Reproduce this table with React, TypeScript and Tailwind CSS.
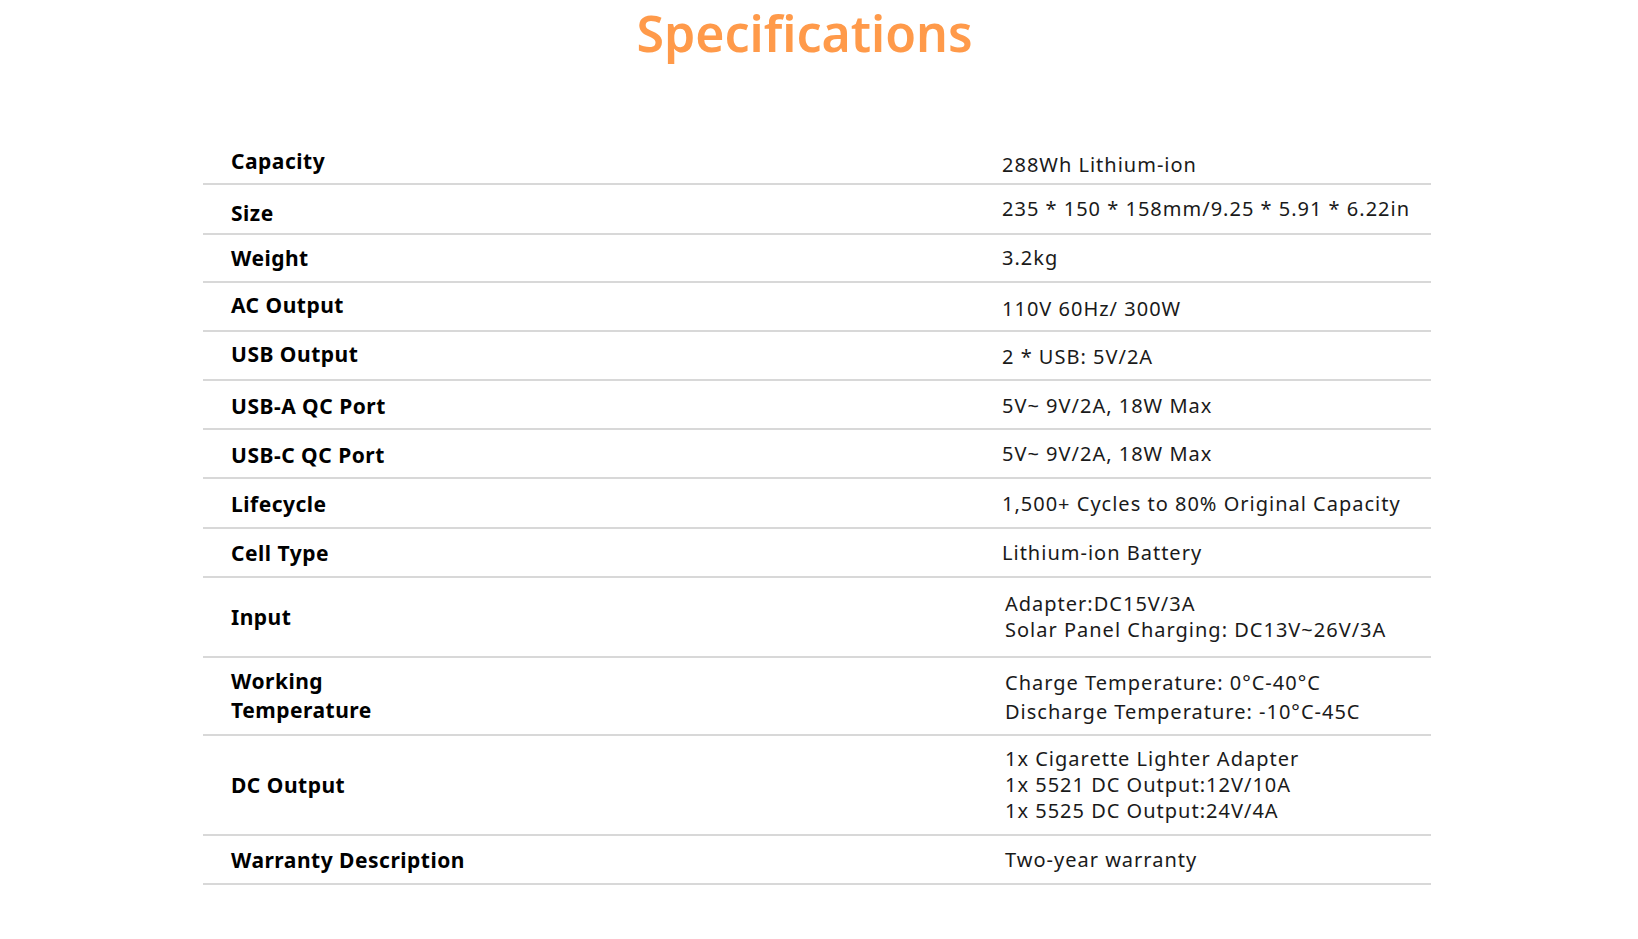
import React from "react";

type Row = {
  label: string[];
  value: string[];
  h: string;
  lh?: string;
  vx?: string;
  lo?: string;
  vo?: string;
};

const rows: Row[] = [
  { label: ["Capacity"], value: ["288Wh Lithium-ion"], h: "h-[46px]", vo: "pt-[8px]" },
  { label: ["Size"], value: ["235 * 150 * 158mm/9.25 * 5.91 * 6.22in"], h: "h-[50px]", lo: "pt-[7px]", vo: "pb-[1px]" },
  { label: ["Weight"], value: ["3.2kg"], h: "h-[48px]", lo: "pb-[1px]", vo: "pb-[1px]" },
  { label: ["AC Output"], value: ["110V 60Hz/ 300W"], h: "h-[49px]", lo: "pb-[4px]", vo: "pt-[4px]" },
  { label: ["USB Output"], value: ["2 * USB: 5V/2A"], h: "h-[49px]", lo: "pb-[4px]", vo: "pt-[2px]" },
  { label: ["USB-A QC Port"], value: ["5V~ 9V/2A, 18W Max"], h: "h-[49px]", lo: "pt-[3px]", vo: "pt-[3px]" },
  { label: ["USB-C QC Port"], value: ["5V~ 9V/2A, 18W Max"], h: "h-[49px]", lo: "pt-[2px]" },
  { label: ["Lifecycle"], value: ["1,500+ Cycles to 80% Original Capacity"], h: "h-[50px]", lo: "pt-[1px]", vo: "pt-[1px]" },
  { label: ["Cell Type"], value: ["Lithium-ion Battery"], h: "h-[49px]", lo: "pt-[1px]", vo: "pt-[1px]" },
  {
    label: ["Input"],
    value: ["Adapter:DC15V/3A", "Solar Panel Charging: DC13V~26V/3A"],
    h: "h-[80px]",
    vx: "pl-[3px]",
  },
  {
    label: ["Working", "Temperature"],
    value: ["Charge Temperature: 0°C-40°C", "Discharge Temperature: -10°C-45C"],
    h: "h-[78px]",
    lh: "leading-[29px]",
    vx: "pl-[3px]",
    lo: "pl-[2px]",
    vo: "pt-[1px]",
  },
  {
    label: ["DC Output"],
    value: [
      "1x Cigarette Lighter Adapter",
      "1x 5521 DC Output:12V/10A",
      "1x 5525 DC Output:24V/4A",
    ],
    h: "h-[100px]",
    vx: "pl-[3px]",
  },
  {
    label: ["Warranty Description"],
    value: ["Two-year warranty"],
    h: "h-[49px]",
    vx: "pl-[3px]",
    lo: "pl-[2px] pt-[1px]",
    vo: "pt-[1px]",
  },
];

export default function App() {
  return (
    <div
      className="min-h-[939px] w-full bg-white"
      style={{ fontFamily: '"Noto Sans", "Open Sans", sans-serif' }}
    >
      <div className="flex justify-center pr-[29px]">
        <h1 className="text-[50px] font-semibold leading-[66px] text-[#ff9a4a]">Specifications</h1>
      </div>
      <div className="ml-[203px] mr-[207px] mt-[73px]">
        {rows.map((r, i) => (
          <div
            key={i}
            className={`grid grid-cols-[799px_1fr] items-center border-b-2 border-[#d8d8d8] ${r.h}`}
          >
            <div
              className={`pl-[28px] text-[21px] font-bold tracking-[0.5px] text-black ${r.lh ?? "leading-[26px]"} ${r.lo ?? ""}`}
            >
              {r.label.map((t, j) => (
                <div key={j}>{t}</div>
              ))}
            </div>
            <div
              className={`text-[20px] tracking-[1px] text-[#1a1a1a] ${r.lh ?? "leading-[26px]"} ${r.vx ?? ""} ${r.vo ?? ""}`}
            >
              {r.value.map((t, j) => (
                <div key={j}>{t}</div>
              ))}
            </div>
          </div>
        ))}
      </div>
    </div>
  );
}
